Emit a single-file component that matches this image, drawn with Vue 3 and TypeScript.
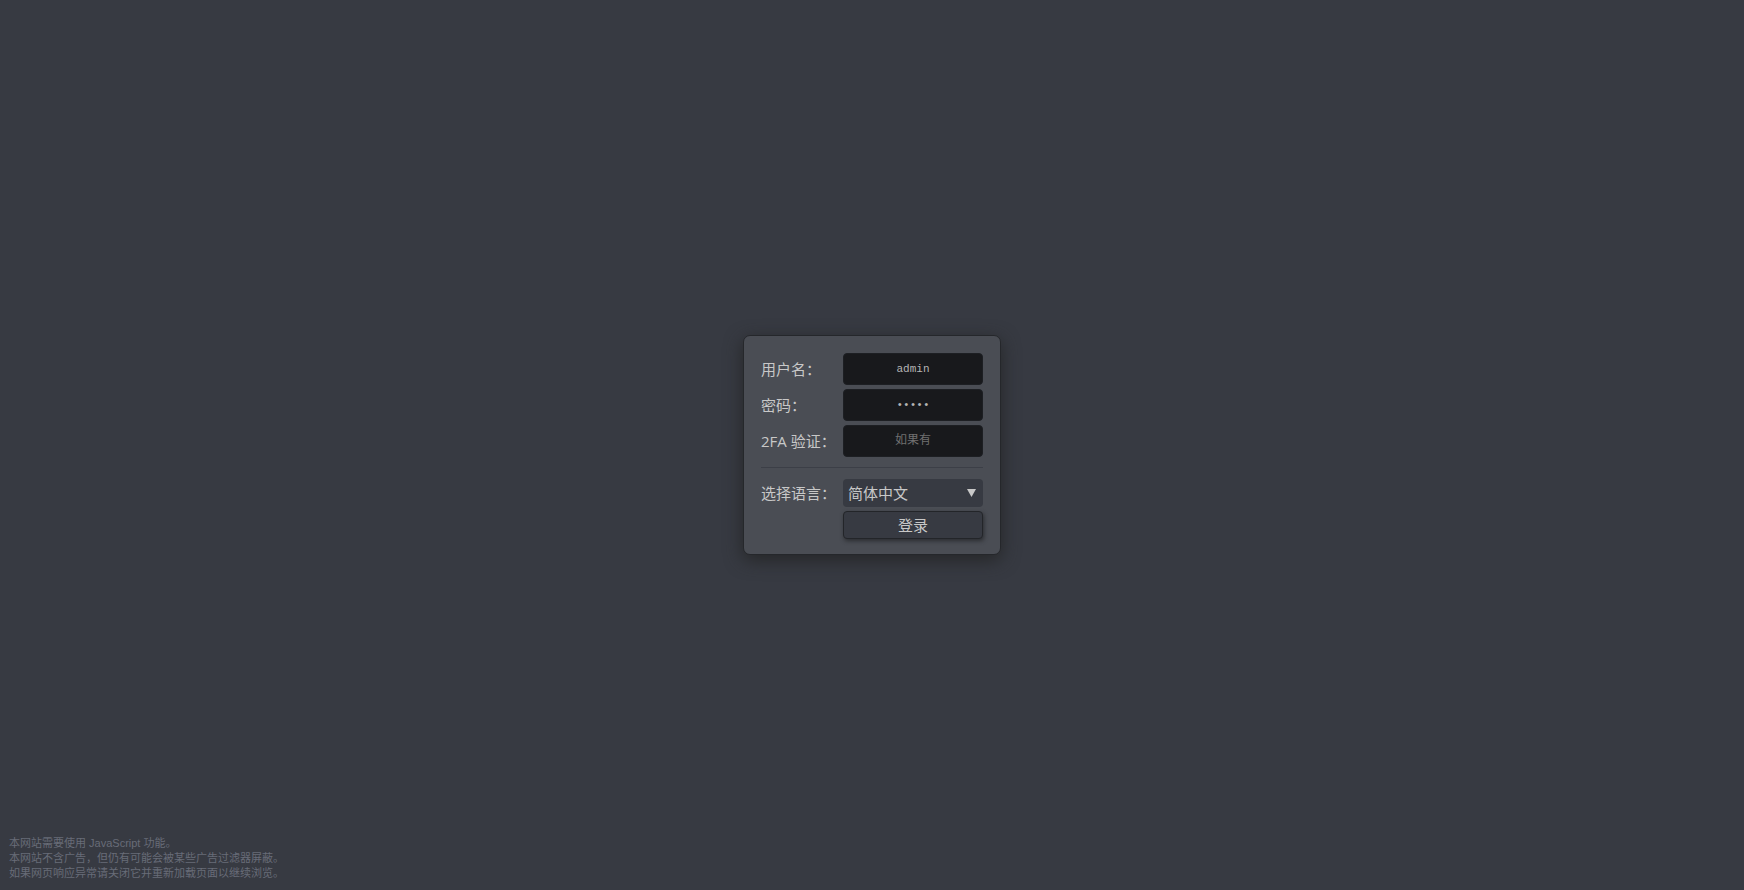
<script setup lang="ts">
import { ref } from 'vue'

const username = ref('admin')
const password = ref('admin')
const code = ref('')
const language = ref('zh-CN')

const languages = [
  { value: 'zh-CN', label: '简体中文' },
  { value: 'en', label: 'English' },
]

const notices = [
  '本网站需要使用 JavaScript 功能。',
  '本网站不含广告，但仍有可能会被某些广告过滤器屏蔽。',
  '如果网页响应异常请关闭它并重新加载页面以继续浏览。',
]
</script>

<template>
  <main class="page">
    <form class="card" @submit.prevent>
      <div class="row">
        <label for="username">用户名：</label>
        <input id="username" v-model="username" class="field" type="text" autocomplete="username" />
      </div>
      <div class="row">
        <label for="password">密码：</label>
        <input id="password" v-model="password" class="field" type="password" autocomplete="current-password" />
      </div>
      <div class="row">
        <label for="code">2FA 验证：</label>
        <input id="code" v-model="code" class="field" type="text" placeholder="如果有" autocomplete="one-time-code" />
      </div>
      <hr class="divider" />
      <div class="row">
        <label for="language">选择语言：</label>
        <div class="select">
          <select id="language" v-model="language">
            <option v-for="item in languages" :key="item.value" :value="item.value">{{ item.label }}</option>
          </select>
          <svg class="arrow" viewBox="0 0 9 8" aria-hidden="true"><path d="M0 0h9L4.5 8z" /></svg>
        </div>
      </div>
      <div class="row">
        <button class="submit" type="submit">登录</button>
      </div>
    </form>
    <footer class="notice">
      <p v-for="line in notices" :key="line">{{ line }}</p>
    </footer>
  </main>
</template>

<style>
html,
body {
  background: #373a42;
}
</style>

<style scoped>
.page {
  position: relative;
  display: grid;
  place-items: center;
  min-height: 100vh;
  background: #373a42;
  color: #c8c8c8;
  font: 15px/20px "Open Sans", "Noto Sans CJK SC", sans-serif;
}

.card {
  display: flex;
  flex-direction: column;
  gap: 4px;
  box-sizing: border-box;
  padding: 17px 17px 15px;
  border: 1px solid #25272b;
  border-radius: 7px;
  background: #4a4d54;
  box-shadow: 0 5px 18px #252627;
}

.row {
  display: grid;
  grid-template-columns: 82px 140px;
  align-items: center;
}

label {
  white-space: nowrap;
}

.field,
.select select,
.submit {
  box-sizing: border-box;
  width: 100%;
  margin: 0;
  border-radius: 4px;
  color: inherit;
  outline: none;
}

.field {
  height: 32px;
  padding: 0 8px;
  border: 1px solid #1d1f23;
  background: #18191c;
  font: 11px/16px "Liberation Mono", "Noto Sans CJK SC", monospace;
  text-align: center;
  color: #b4b4b4;
}

.field::placeholder {
  color: #707070;
  font-size: 12px;
  opacity: 1;
}

.divider {
  width: 100%;
  height: 1px;
  margin: 6px 0 7px;
  border: 0;
  background: #3c3f47;
}

.select {
  position: relative;
  display: flex;
}

.select select {
  height: 28px;
  padding: 0 24px 0 5px;
  border: 0;
  background: #373a42;
  appearance: none;
  font: inherit;
}

.arrow {
  position: absolute;
  top: 10px;
  right: 7px;
  width: 9px;
  height: 8px;
  fill: #c8c8c8;
  pointer-events: none;
}

.submit {
  grid-column: 2;
  height: 28px;
  padding: 0;
  border: 1px solid #232529;
  background: #373a42;
  box-shadow: 1px 2px 4px #2b2d31;
  font: inherit;
}

.notice {
  position: absolute;
  bottom: 9px;
  left: 9px;
  color: #686c78;
  font: 11px/15px "Liberation Sans", "Noto Sans CJK SC", sans-serif;
}

.notice p {
  margin: 0;
}
</style>
